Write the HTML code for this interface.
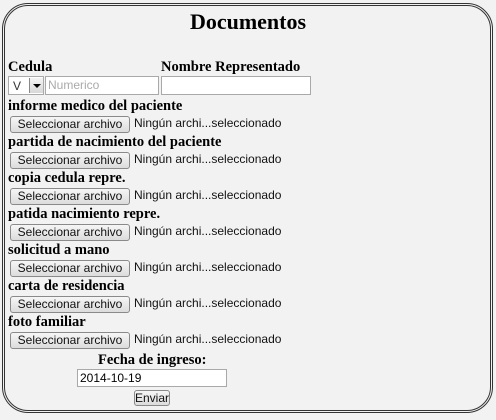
<!DOCTYPE html>
<html><head><style>
body{margin:0;width:496px;height:420px;background:#f2f2f2;position:relative;overflow:hidden;font-family:"Liberation Serif",serif;}
.box{position:absolute;left:2px;top:3px;width:485px;height:404px;border:3px double #333;border-radius:26px;}
.a{position:absolute;white-space:nowrap}
.l{font-weight:bold;font-size:14.5px;color:#000}
.btn{position:absolute;height:15px;border:1px solid #8a8a8a;border-radius:3px;background:linear-gradient(#f6f6f6,#dcdcdc);font:12px "Liberation Sans",sans-serif;line-height:15px;text-align:center;color:#111}
.nt{position:absolute;font:12px "Liberation Sans",sans-serif;color:#111;line-height:16px}
.in{position:absolute;background:#fff;border:1px solid #a9a9a9;height:16px;font:12px "Liberation Sans",sans-serif;line-height:16px}
</style></head><body>
<div class="box"></div>
<div class="a" style="left:0;width:496px;text-align:center;top:9px;font-weight:bold;font-size:22px">Documentos</div>
<div class="a l" style="left:8px;top:59px">Cedula</div>
<div class="a l" style="left:161px;top:59px">Nombre Representado</div>
<div class="in" style="left:8px;top:76px;width:34px;height:17px"><span style="position:absolute;left:4px;top:1px;color:#333">V</span><span style="position:absolute;left:20px;top:1px;width:13px;height:15px;background:linear-gradient(#f4f4f4,#d8d8d8);border-left:1px solid #888"><span style="position:absolute;left:3px;top:6px;border:4px solid transparent;border-top:4px solid #000;border-bottom:0"></span></span></div>
<div class="in" style="left:45px;top:76px;width:112px;height:17px;color:#aaa"><span style="margin-left:2px">Numerico</span></div>
<div class="in" style="left:161px;top:76px;width:148px;height:17px"></div>

<div class="a l" style="left:8px;top:98px">informe medico del paciente</div>
<div class="btn" style="left:10px;top:116px;width:118px">Seleccionar archivo</div><div class="nt" style="left:134px;top:115px">Ningún archi...seleccionado</div>
<div class="a l" style="left:8px;top:134px">partida de nacimiento del paciente</div>
<div class="btn" style="left:10px;top:152px;width:118px">Seleccionar archivo</div><div class="nt" style="left:134px;top:151px">Ningún archi...seleccionado</div>
<div class="a l" style="left:8px;top:170px">copia cedula repre.</div>
<div class="btn" style="left:10px;top:188px;width:118px">Seleccionar archivo</div><div class="nt" style="left:134px;top:187px">Ningún archi...seleccionado</div>
<div class="a l" style="left:8px;top:206px">patida nacimiento repre.</div>
<div class="btn" style="left:10px;top:224px;width:118px">Seleccionar archivo</div><div class="nt" style="left:134px;top:223px">Ningún archi...seleccionado</div>
<div class="a l" style="left:8px;top:242px">solicitud a mano</div>
<div class="btn" style="left:10px;top:260px;width:118px">Seleccionar archivo</div><div class="nt" style="left:134px;top:259px">Ningún archi...seleccionado</div>
<div class="a l" style="left:8px;top:278px">carta de residencia</div>
<div class="btn" style="left:10px;top:296px;width:118px">Seleccionar archivo</div><div class="nt" style="left:134px;top:295px">Ningún archi...seleccionado</div>
<div class="a l" style="left:8px;top:314px">foto familiar</div>
<div class="btn" style="left:10px;top:332px;width:118px">Seleccionar archivo</div><div class="nt" style="left:134px;top:331px">Ningún archi...seleccionado</div>

<div class="a l" style="left:98px;top:352px">Fecha de ingreso:</div>
<div class="in" style="left:77px;top:369px;width:148px;height:16px"><span style="margin-left:2px">2014-10-19</span></div>
<div class="btn" style="left:134px;top:390px;width:34px;height:14px;line-height:14px">Enviar</div>
</body></html>
